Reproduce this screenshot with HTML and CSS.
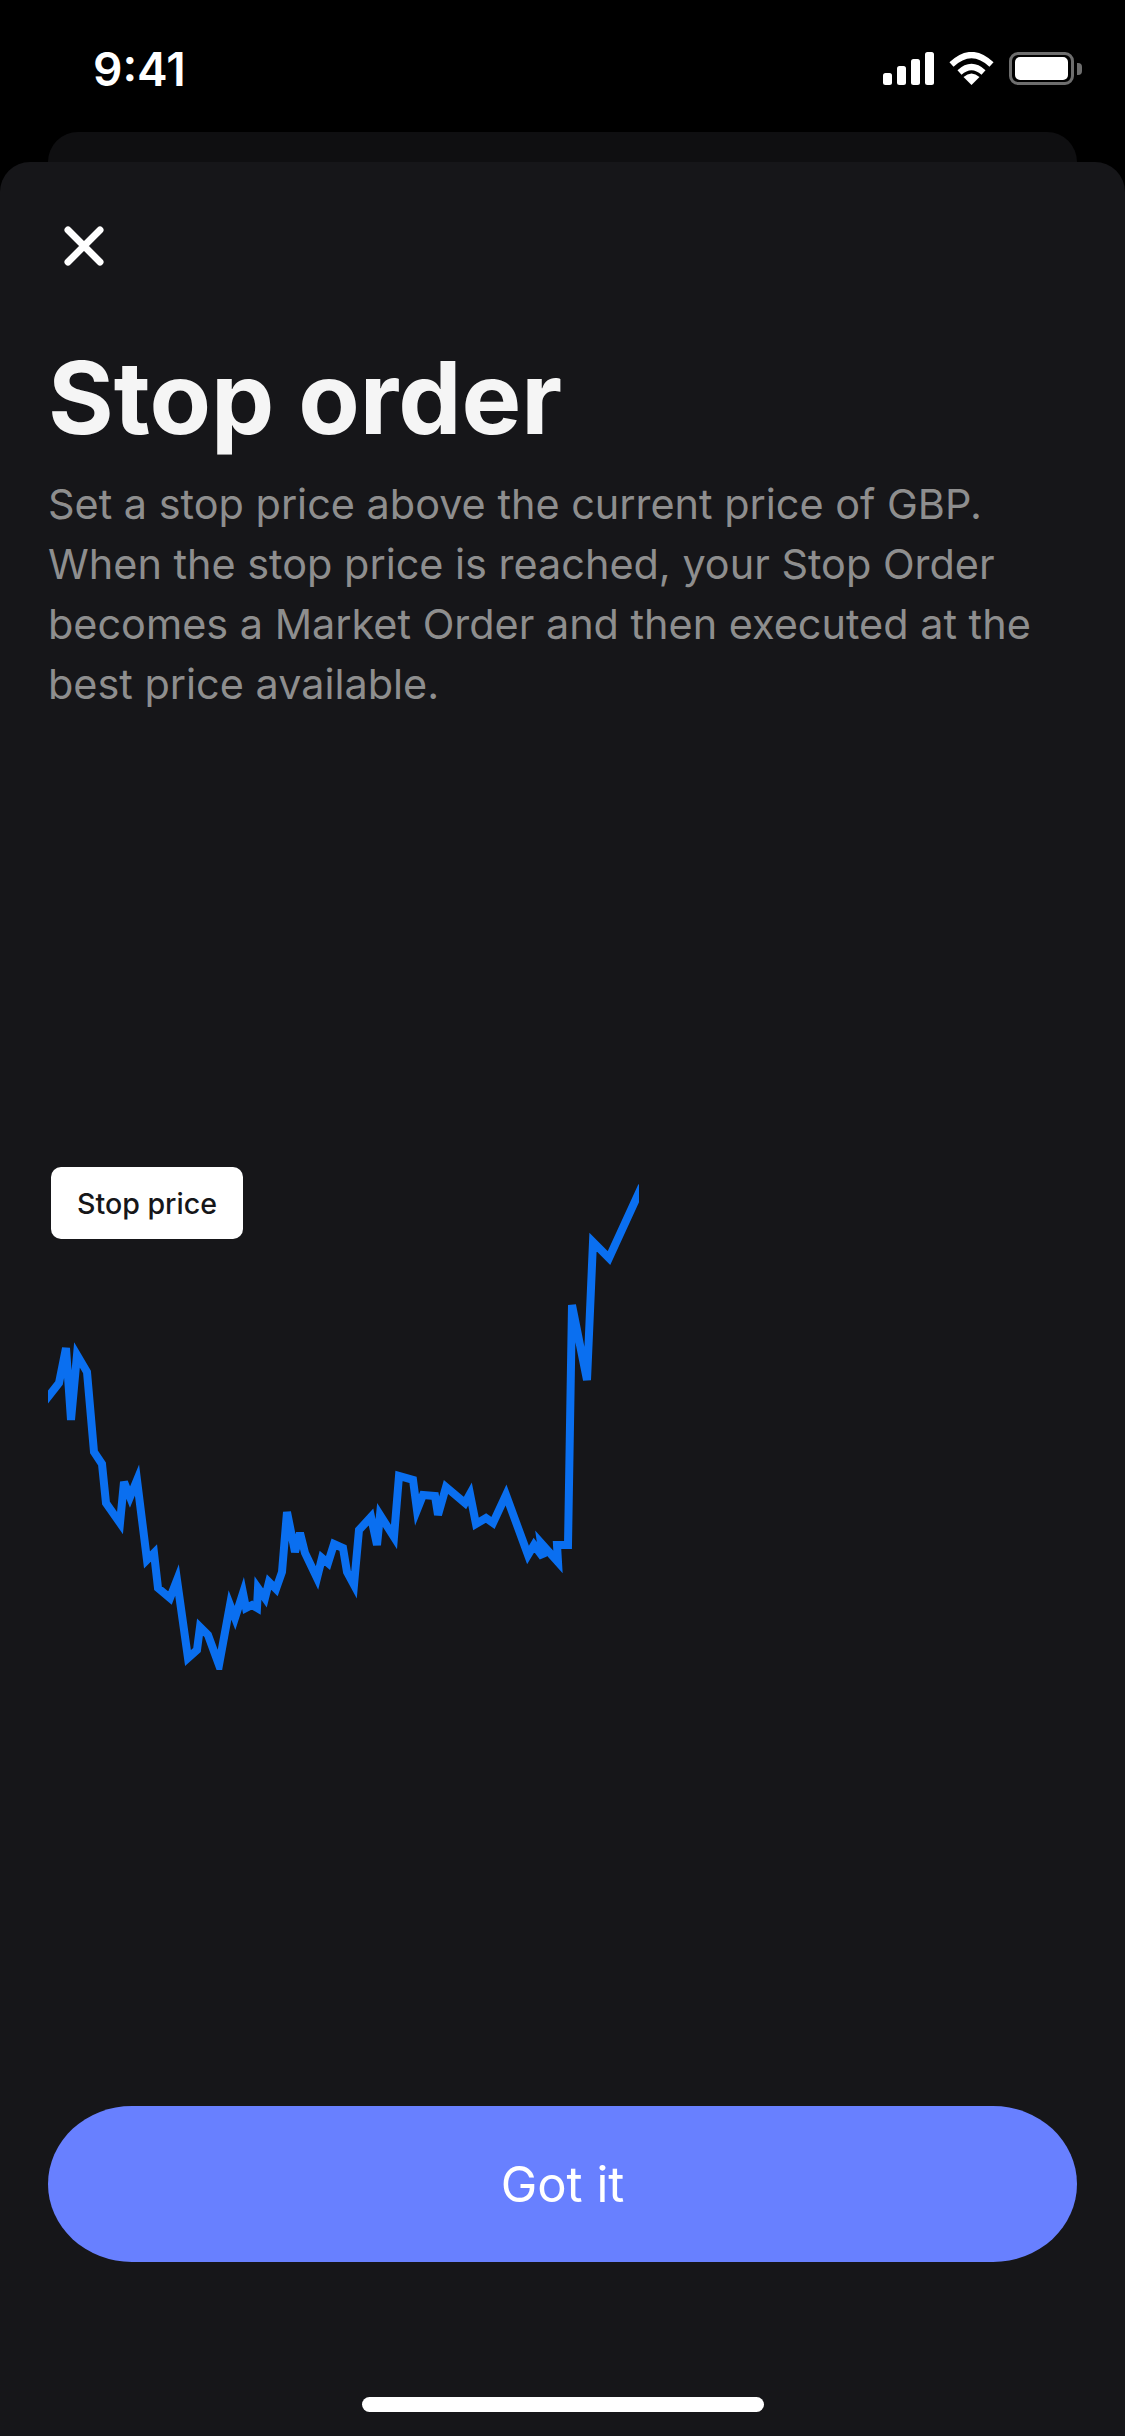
FILE: index.html
```html
<!DOCTYPE html>
<html lang="en">
<head>
<meta charset="utf-8">
<title>Stop order</title>
<link rel="stylesheet" href="styles.css">
</head>
<body>
<div class="screen">
  <header class="status">
    <span class="time">9:41</span>
    <div class="status-icons">
      <svg class="signal" width="51" height="33" viewBox="0 0 51 33"><rect x="0" y="21" width="9" height="12" rx="2.500"/><rect x="14" y="14" width="9" height="19" rx="2.500"/><rect x="28" y="7" width="9" height="26" rx="2.500"/><rect x="42" y="0" width="9" height="33" rx="2.500"/></svg>
      <svg class="wifi" width="45" height="33" viewBox="0 0 45 33"><path class="arc" d="M2.500 12.500Q22.500 -6.500 42.500 12.500"/><path class="arc" d="M10.500 20.500Q22.500 9.500 34.500 20.500"/><path d="M22.500 33L30.500 25Q22.500 18 14.500 25Z"/></svg>
      <div class="battery"><div class="battery-body"><div class="battery-fill"></div></div><div class="battery-cap"></div></div>
    </div>
  </header>
  <div class="back-card"></div>
  <main class="sheet">
    <svg class="close" width="40" height="40" viewBox="0 0 40 40"><path d="M4 4L36 36M36 4L4 36"/></svg>
    <h1 class="title">Stop order</h1>
    <p class="desc">Set a stop price above the current price of GBP. When the stop price is reached, your Stop Order becomes a Market Order and then executed at the best price available.</p>
    <div class="chart">
      <span class="tag">Stop price</span>
      <svg class="line" width="591" height="500" viewBox="48 1170 591 500"><polyline points="44,1402 59,1383 66,1348 71,1420 77,1355 87,1372 94,1452 102,1464 106,1503 120,1523 124,1482 130,1497 137,1480 147,1560 154,1553 158,1588 170,1598 177,1580 188,1658 197,1650 200,1627 208,1635 219,1665 230,1605 235,1618 243,1593 246,1608 252,1605 257,1608 258,1588 265,1598 269,1582 276,1589 282,1572 287,1512 295,1552 300,1533 305,1553 317,1578 322,1558 328,1563 334,1544 343,1548 347,1572 354,1585 359,1530 371,1517 377,1545 380,1515 394,1537 399,1476 413,1480 417,1510 423,1495 435,1496 438,1515 446,1487 465,1503 470,1494 476,1524 486,1518 493,1523 506,1495 528,1555 534,1545 543,1557 541,1543 558,1562 557,1545 568,1545 572,1305 587,1380 593,1242 609,1258 642,1186"/></svg>
    </div>
    <button class="cta">Got it</button>
    <div class="home"></div>
  </main>
</div>
</body>
</html>
```
FILE: styles.css
```css
* { box-sizing: border-box; margin: 0; padding: 0; }
html, body { background: #000; }
body { width: 1125px; height: 2436px; overflow: hidden; font-family: Inter, "Liberation Sans", sans-serif; color: #fff; }
.screen { display: flex; flex-direction: column; height: 2436px; }
.status { height: 132px; flex: none; display: flex; justify-content: space-between; align-items: flex-start; padding: 46px 43px 0 93px; }
.time { font-size: 46px; font-weight: 600; line-height: 46px; }
.status-icons { display: flex; align-items: center; gap: 15px; margin-top: 6px; }
.status-icons svg { display: block; fill: #fff; }
.wifi .arc { fill: none; stroke: #fff; stroke-width: 6px; }
.battery { display: flex; align-items: center; gap: 3px; }
.battery-body { width: 65px; height: 33px; border: 3px solid #6e6e6e; border-radius: 9px; padding: 2px 3px; }
.battery-fill { height: 100%; background: #fff; border-radius: 5px; }
.battery-cap { width: 5px; height: 12px; background: #6e6e6e; border-radius: 0 4px 4px 0; }
.back-card { height: 30px; flex: none; margin: 0 48px; background: #0f0f11; border-radius: 30px 30px 0 0; }
.sheet { flex: 1; background: #161619; border-radius: 30px 30px 0 0; padding: 64px 48px 24px; display: flex; flex-direction: column; }
.close { display: block; margin-left: 16px; flex: none; }
.close path { fill: none; stroke: #fff; stroke-width: 7px; stroke-linecap: round; }
.title { font-size: 100.4px; font-weight: 700; line-height: 110px; margin-top: 77px; color: #f5f5f5; }
.desc { font-size: 41.4px; line-height: 60px; color: #8e8e8e; margin-top: 21px; }
.chart { position: relative; margin-top: 456px; height: 500px; flex: none; }
.tag { position: absolute; left: 3px; top: -3px; z-index: 1; width: 192px; height: 72px; background: #fff; border-radius: 10px; color: #161619; font-size: 28.6px; font-weight: 500; line-height: 74px; text-align: center; }
.line { display: block; overflow: hidden; }
.line polyline { fill: none; stroke: #0a6ff0; stroke-width: 8px; }
.cta { display: block; margin-top: auto; height: 156px; flex: none; border: 0; border-radius: 84px / 78px; background: #6880ff; color: #fff; font: 400 49px Inter, "Liberation Sans", sans-serif; }
.home { width: 402px; height: 15px; flex: none; align-self: center; margin-top: 135px; background: #fff; border-radius: 8px; }
```
